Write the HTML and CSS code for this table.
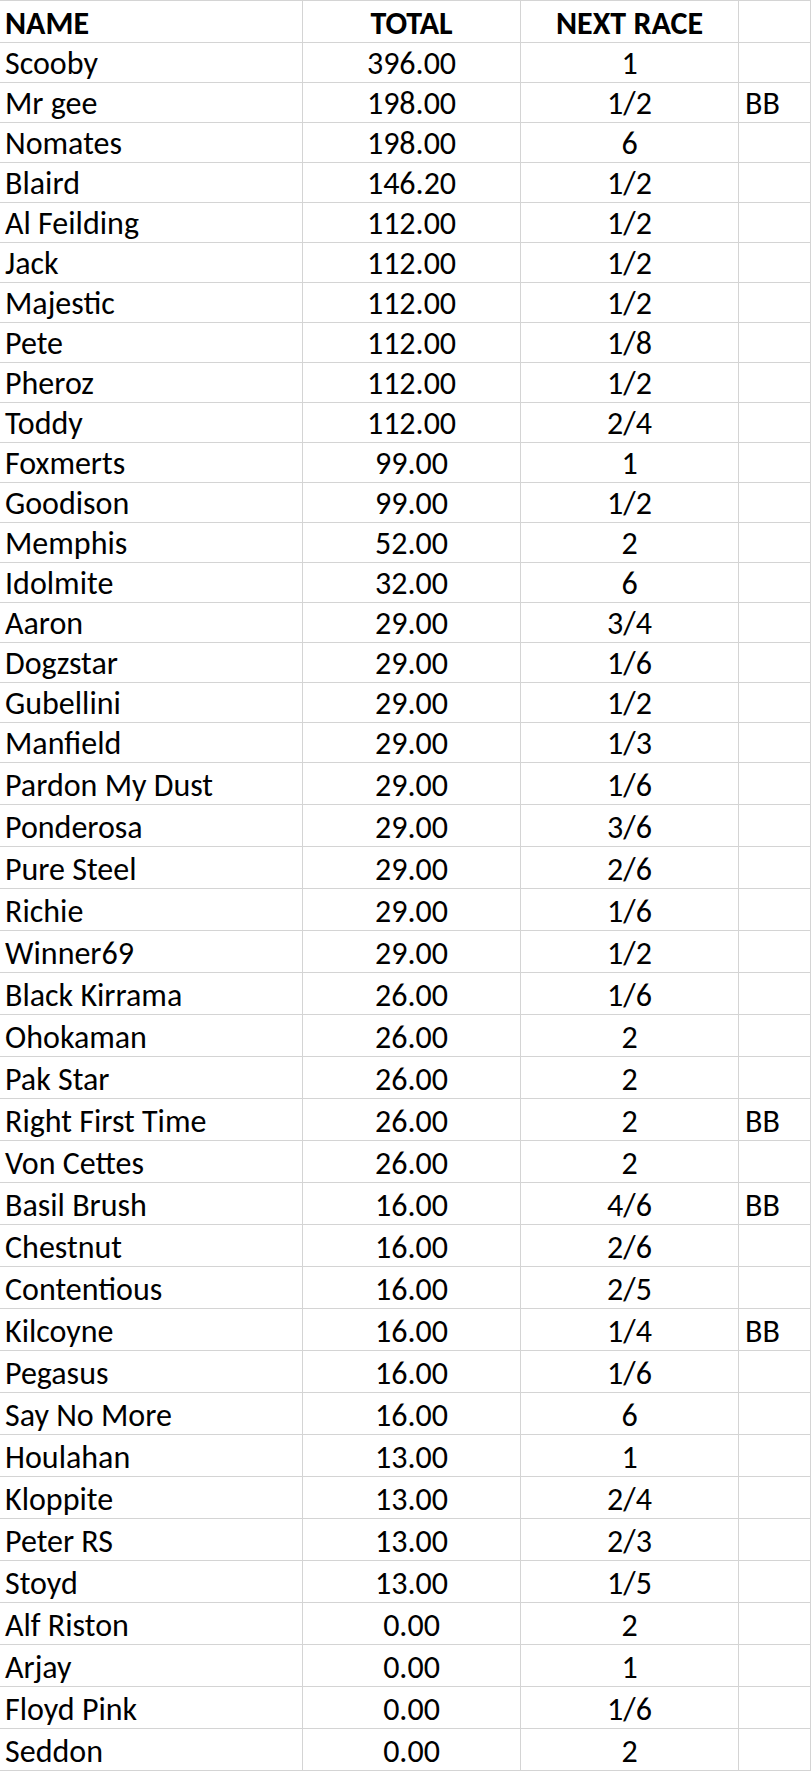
FILE: index.html
```html
<!DOCTYPE html>
<html>
<head>
<meta charset="utf-8">
<link rel="stylesheet" href="styles.css">
</head>
<body>
<div class="sheet">
  <div class="row head">
    <div class="c a">NAME</div><div class="c b">TOTAL</div><div class="c n">NEXT RACE</div><div class="c d"></div>
  </div>
  <div class="row"><div class="c a">Scooby</div><div class="c b">396.00</div><div class="c n">1</div><div class="c d"></div></div>
  <div class="row"><div class="c a">Mr gee</div><div class="c b">198.00</div><div class="c n">1/2</div><div class="c d">BB</div></div>
  <div class="row"><div class="c a">Nomates</div><div class="c b">198.00</div><div class="c n">6</div><div class="c d"></div></div>
  <div class="row"><div class="c a">Blaird</div><div class="c b">146.20</div><div class="c n">1/2</div><div class="c d"></div></div>
  <div class="row"><div class="c a">Al Feilding</div><div class="c b">112.00</div><div class="c n">1/2</div><div class="c d"></div></div>
  <div class="row"><div class="c a">Jack</div><div class="c b">112.00</div><div class="c n">1/2</div><div class="c d"></div></div>
  <div class="row"><div class="c a">Majestic</div><div class="c b">112.00</div><div class="c n">1/2</div><div class="c d"></div></div>
  <div class="row"><div class="c a">Pete</div><div class="c b">112.00</div><div class="c n">1/8</div><div class="c d"></div></div>
  <div class="row"><div class="c a">Pheroz</div><div class="c b">112.00</div><div class="c n">1/2</div><div class="c d"></div></div>
  <div class="row"><div class="c a">Toddy</div><div class="c b">112.00</div><div class="c n">2/4</div><div class="c d"></div></div>
  <div class="row"><div class="c a">Foxmerts</div><div class="c b">99.00</div><div class="c n">1</div><div class="c d"></div></div>
  <div class="row"><div class="c a">Goodison</div><div class="c b">99.00</div><div class="c n">1/2</div><div class="c d"></div></div>
  <div class="row"><div class="c a">Memphis</div><div class="c b">52.00</div><div class="c n">2</div><div class="c d"></div></div>
  <div class="row"><div class="c a">Idolmite</div><div class="c b">32.00</div><div class="c n">6</div><div class="c d"></div></div>
  <div class="row"><div class="c a">Aaron</div><div class="c b">29.00</div><div class="c n">3/4</div><div class="c d"></div></div>
  <div class="row"><div class="c a">Dogzstar</div><div class="c b">29.00</div><div class="c n">1/6</div><div class="c d"></div></div>
  <div class="row"><div class="c a">Gubellini</div><div class="c b">29.00</div><div class="c n">1/2</div><div class="c d"></div></div>
  <div class="row"><div class="c a">Manfield</div><div class="c b">29.00</div><div class="c n">1/3</div><div class="c d"></div></div>
  <div class="row tall"><div class="c a">Pardon My Dust</div><div class="c b">29.00</div><div class="c n">1/6</div><div class="c d"></div></div>
  <div class="row tall"><div class="c a">Ponderosa</div><div class="c b">29.00</div><div class="c n">3/6</div><div class="c d"></div></div>
  <div class="row tall"><div class="c a">Pure Steel</div><div class="c b">29.00</div><div class="c n">2/6</div><div class="c d"></div></div>
  <div class="row tall"><div class="c a">Richie</div><div class="c b">29.00</div><div class="c n">1/6</div><div class="c d"></div></div>
  <div class="row tall"><div class="c a">Winner69</div><div class="c b">29.00</div><div class="c n">1/2</div><div class="c d"></div></div>
  <div class="row tall"><div class="c a">Black Kirrama</div><div class="c b">26.00</div><div class="c n">1/6</div><div class="c d"></div></div>
  <div class="row tall"><div class="c a">Ohokaman</div><div class="c b">26.00</div><div class="c n">2</div><div class="c d"></div></div>
  <div class="row tall"><div class="c a">Pak Star</div><div class="c b">26.00</div><div class="c n">2</div><div class="c d"></div></div>
  <div class="row tall"><div class="c a">Right First Time</div><div class="c b">26.00</div><div class="c n">2</div><div class="c d">BB</div></div>
  <div class="row tall"><div class="c a">Von Cettes</div><div class="c b">26.00</div><div class="c n">2</div><div class="c d"></div></div>
  <div class="row tall"><div class="c a">Basil Brush</div><div class="c b">16.00</div><div class="c n">4/6</div><div class="c d">BB</div></div>
  <div class="row tall"><div class="c a">Chestnut</div><div class="c b">16.00</div><div class="c n">2/6</div><div class="c d"></div></div>
  <div class="row tall"><div class="c a">Contentious</div><div class="c b">16.00</div><div class="c n">2/5</div><div class="c d"></div></div>
  <div class="row tall"><div class="c a">Kilcoyne</div><div class="c b">16.00</div><div class="c n">1/4</div><div class="c d">BB</div></div>
  <div class="row tall"><div class="c a">Pegasus</div><div class="c b">16.00</div><div class="c n">1/6</div><div class="c d"></div></div>
  <div class="row tall"><div class="c a">Say No More</div><div class="c b">16.00</div><div class="c n">6</div><div class="c d"></div></div>
  <div class="row tall"><div class="c a">Houlahan</div><div class="c b">13.00</div><div class="c n">1</div><div class="c d"></div></div>
  <div class="row tall"><div class="c a">Kloppite</div><div class="c b">13.00</div><div class="c n">2/4</div><div class="c d"></div></div>
  <div class="row tall"><div class="c a">Peter RS</div><div class="c b">13.00</div><div class="c n">2/3</div><div class="c d"></div></div>
  <div class="row tall"><div class="c a">Stoyd</div><div class="c b">13.00</div><div class="c n">1/5</div><div class="c d"></div></div>
  <div class="row tall"><div class="c a">Alf Riston</div><div class="c b">0.00</div><div class="c n">2</div><div class="c d"></div></div>
  <div class="row tall"><div class="c a">Arjay</div><div class="c b">0.00</div><div class="c n">1</div><div class="c d"></div></div>
  <div class="row tall"><div class="c a">Floyd Pink</div><div class="c b">0.00</div><div class="c n">1/6</div><div class="c d"></div></div>
  <div class="row tall"><div class="c a">Seddon</div><div class="c b">0.00</div><div class="c n">2</div><div class="c d"></div></div>
</div>
</body>
</html>
```
FILE: styles.css
```css
html, body {
  margin: 0;
  padding: 0;
  background: #ffffff;
}
.sheet {
  width: 811px;
  border-top: 1px solid #d4d4d4;
  font-family: Carlito, Lato, "Liberation Sans", sans-serif;
  font-size: 32px;
  color: #000000;
}
.row {
  display: grid;
  grid-template-columns: 303px 218px 218px 72px;
  height: 40px;
}
.row.head {
  height: 42px;
  font-weight: bold;
}
.row.tall {
  height: 42px;
}
.c {
  box-sizing: border-box;
  border-right: 1px solid #d4d4d4;
  border-bottom: 1px solid #d4d4d4;
  display: flex;
  align-items: flex-end;
  line-height: 32px;
  padding-bottom: 2px;
  white-space: nowrap;
}
.a {
  padding-left: 5px;
}
.b, .n {
  justify-content: center;
}
.d {
  padding-left: 6px;
}
```
